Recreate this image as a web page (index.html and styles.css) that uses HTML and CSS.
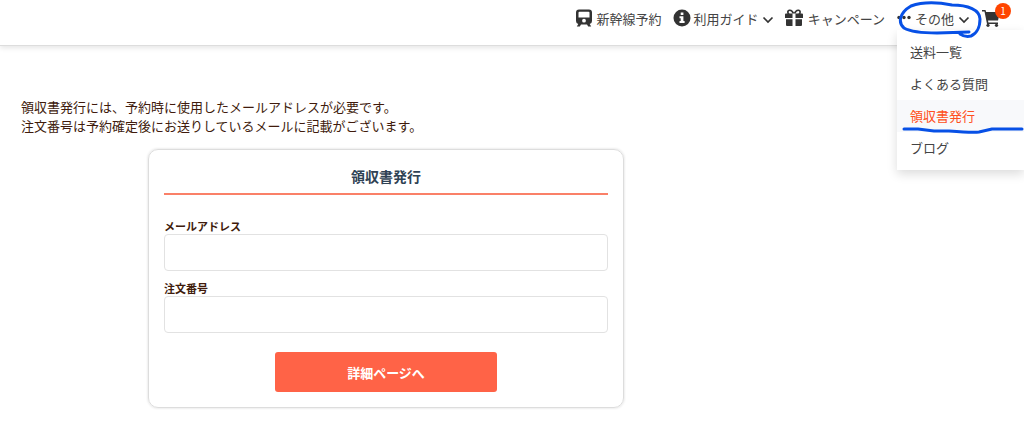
FILE: index.html
```html
<!DOCTYPE html>
<html lang="ja">
<head>
<meta charset="utf-8">
<meta name="viewport" content="width=device-width, initial-scale=1">
<title>領収書発行</title>
<link rel="stylesheet" href="styles.css">
</head>
<body>
<header class="header">
  <nav class="nav">
    <a class="nav-link" href="#">
      <svg class="icon train" viewBox="0 0 16 18" aria-hidden="true"><path fill-rule="evenodd" d="M3 .5h10q3 0 3 3V12q0 2.500-2.300 3l1.500 2.500h-3L11 15.500H5L3.800 17.500h-3L2.300 15Q0 14.500 0 12V3.500Q0 .5 3 .5zM3.500 2.800Q2.500 2.800 2.500 3.800V8.500h11V3.800q0-1-1-1zM8 9.800a1.900 1.900 0 1 0 0 3.800 1.900 1.900 0 0 0 0-3.800z"/></svg>
      <span>新幹線予約</span>
    </a>
    <a class="nav-link guide" href="#">
      <svg class="icon info" viewBox="0 0 18 18" aria-hidden="true"><circle cx="9" cy="9" r="8.500"/><path class="cut" d="M7.700 3.500h2.700v2.600H7.700zM6.500 7.300h3.900v4.800h1.200v1.900H6.500v-1.900h1.200V9.200H6.500z"/></svg>
      <span>利用ガイド</span>
      <svg class="chevron" viewBox="0 0 12 8" aria-hidden="true"><path d="M1.500 1.500 6 6l4.500-4.500"/></svg>
    </a>
    <a class="nav-link campaign" href="#">
      <svg class="icon gift" viewBox="0 0 18 18" aria-hidden="true"><path fill-rule="evenodd" d="M1 4.500h1.400C1.200 2 3 .5 5 .5 7 .5 8 2 9 3.500 10 2 11 .5 13 .5c2 0 3.800 1.500 2.600 4H17q1 0 1 1V9h-7.500V4.500h-3V9H0V5.500q0-1 1-1zM5 2Q3.500 2 3.700 3.400q.2 1 1.300 1.100h2.500Q6.500 2 5 2zm8 0q-1.500 0-2.500 2.500H13q1.100-.1 1.300-1.100Q14.500 2 13 2zM1 10.300h6.500V17H2q-1 0-1-1zm9.500 0H17V16q0 1-1 1h-5.500z"/></svg>
      <span>キャンペーン</span>
    </a>
    <div class="nav-group">
      <a class="nav-link" href="#" aria-expanded="true">
        <svg class="icon dots" viewBox="0 0 14 18" aria-hidden="true"><circle cx="2" cy="8.500" r="1.700"/><circle cx="7" cy="8.500" r="1.700"/><circle cx="12" cy="8.500" r="1.700"/></svg>
        <span>その他</span>
        <svg class="chevron" viewBox="0 0 12 8" aria-hidden="true"><path d="M1.500 1.500 6 6l4.500-4.500"/></svg>
      </a>
      <div class="menu">
        <a class="menu-item" href="#">送料一覧</a>
        <a class="menu-item" href="#">よくある質問</a>
        <a class="menu-item current" href="#">領収書発行</a>
        <a class="menu-item" href="#">ブログ</a>
      </div>
      <svg class="marks" viewBox="0 0 126 136" aria-hidden="true">
        <path d="M72 32 40 33C26 33 14 32 7 28 1 23 2 13 14 6 25 2 40 2 55 5c16 0 28 5 28 14 0 9-4 15-9 17-4 1-8 0-11-2"/>
        <path d="M7 129h14l16 2h15c12 1 25 2 30 1l13-3h30"/>
      </svg>
    </div>
    <a class="cart" href="#" aria-label="カート">
      <svg class="icon cart-icon" viewBox="0 0 18 18" aria-hidden="true"><path d="M0 1h3.500l.6 2H18l-2 8.500H6l.4 2H16V15H5L2.500 2.500H0z"/><circle cx="6" cy="16.300" r="1.600"/><circle cx="14.500" cy="16.300" r="1.600"/></svg>
      <span class="badge">1</span>
    </a>
  </nav>
</header>
<main class="main">
  <p class="intro">領収書発行には、予約時に使用したメールアドレスが必要です。<br>注文番号は予約確定後にお送りしているメールに記載がございます。</p>
  <form class="card">
    <h1 class="title">領収書発行</h1>
    <div class="field">
      <label class="label" for="email">メールアドレス</label>
      <input class="input" id="email" type="email">
    </div>
    <div class="field">
      <label class="label" for="order">注文番号</label>
      <input class="input" id="order" type="text">
    </div>
    <button class="submit" type="submit">詳細ページへ</button>
  </form>
</main>
</body>
</html>
```

FILE: styles.css
```css
* {
  box-sizing: border-box;
}

body {
  margin: 0;
  background: #fff;
  color: #401b0c;
  font: 13px/19px "Noto Sans CJK JP", sans-serif;
}

a {
  color: #444;
  text-decoration: none;
}

.header {
  border-bottom: 1px solid #ddd;
  box-shadow: 0 2px 5px rgba(0, 0, 0, .1);
}

.nav {
  display: flex;
  justify-content: flex-end;
  height: 45px;
  padding: 9px 24px 0 0;
}

.nav-link {
  display: flex;
  gap: 5px;
  height: 20px;
  white-space: nowrap;
}

.guide {
  margin-left: 11px;
  gap: 3px;
}

.campaign {
  margin-left: 11px;
  gap: 5px;
}

.icon {
  flex: none;
  height: 18px;
  fill: #333;
}

.train {
  width: 16px;
}

.info,
.gift,
.cart-icon {
  width: 18px;
}

.nav-group .nav-link {
  gap: 4px;
}

.dots {
  width: 14px;
}

.cut {
  fill: #fff;
}

.chevron {
  width: 12px;
  height: 8px;
  margin-top: 7px;
  fill: none;
  stroke: #333;
  stroke-width: 1.7;
}

.nav-group {
  position: relative;
  margin-left: 12px;
}

.menu {
  position: absolute;
  top: 21px;
  left: 0;
  width: 127px;
  padding: 6px 0;
  background: #fff;
  box-shadow: 0 4px 10px rgba(0, 0, 0, .14);
}

.menu-item {
  display: block;
  padding: 6px 13px;
  line-height: 20px;
}

.current {
  background: #f8f9fb;
  color: #ff4f20;
}

.marks {
  position: absolute;
  top: -9px;
  left: 0;
  width: 126px;
  height: 136px;
  overflow: visible;
  pointer-events: none;
  fill: none;
  stroke: #0750e6;
  stroke-width: 3;
  stroke-linecap: round;
  stroke-linejoin: round;
}

.cart {
  position: relative;
  margin-left: 12px;
}

.badge {
  position: absolute;
  top: -6px;
  left: 13px;
  width: 16px;
  height: 16px;
  border-radius: 50%;
  background: #ff4500;
  color: #fff;
  font-size: 10px;
  line-height: 16px;
  text-align: center;
}

.main {
  max-width: 772px;
  padding: 51px 21px 24px;
}

.intro {
  margin: 0 0 14px;
}

.card {
  max-width: 476px;
  margin: 0 auto;
  padding: 15px;
  border: 1px solid #ddd;
  border-radius: 10px;
  box-shadow: 0 0 2px 1px rgba(0, 0, 0, .07);
}

.title {
  margin: 0 0 23px;
  padding-bottom: 6px;
  border-bottom: 2px solid #fa8068;
  color: #2f4254;
  font-size: 14px;
  line-height: 22px;
  text-align: center;
}

.field {
  margin-bottom: 9px;
}

.label {
  display: block;
  font-size: 11px;
  font-weight: 700;
  line-height: 16px;
}

.input {
  display: block;
  width: 100%;
  height: 37px;
  padding: 0 10px;
  border: 1px solid #e2e2e2;
  border-radius: 4px;
  background: #fff;
  font: inherit;
}

.submit {
  display: block;
  width: 50%;
  height: 40px;
  margin: 19px auto 0;
  border: 0;
  border-radius: 3px;
  background: #ff6347;
  color: #fff;
  font: inherit;
  font-weight: 700;
}
```
